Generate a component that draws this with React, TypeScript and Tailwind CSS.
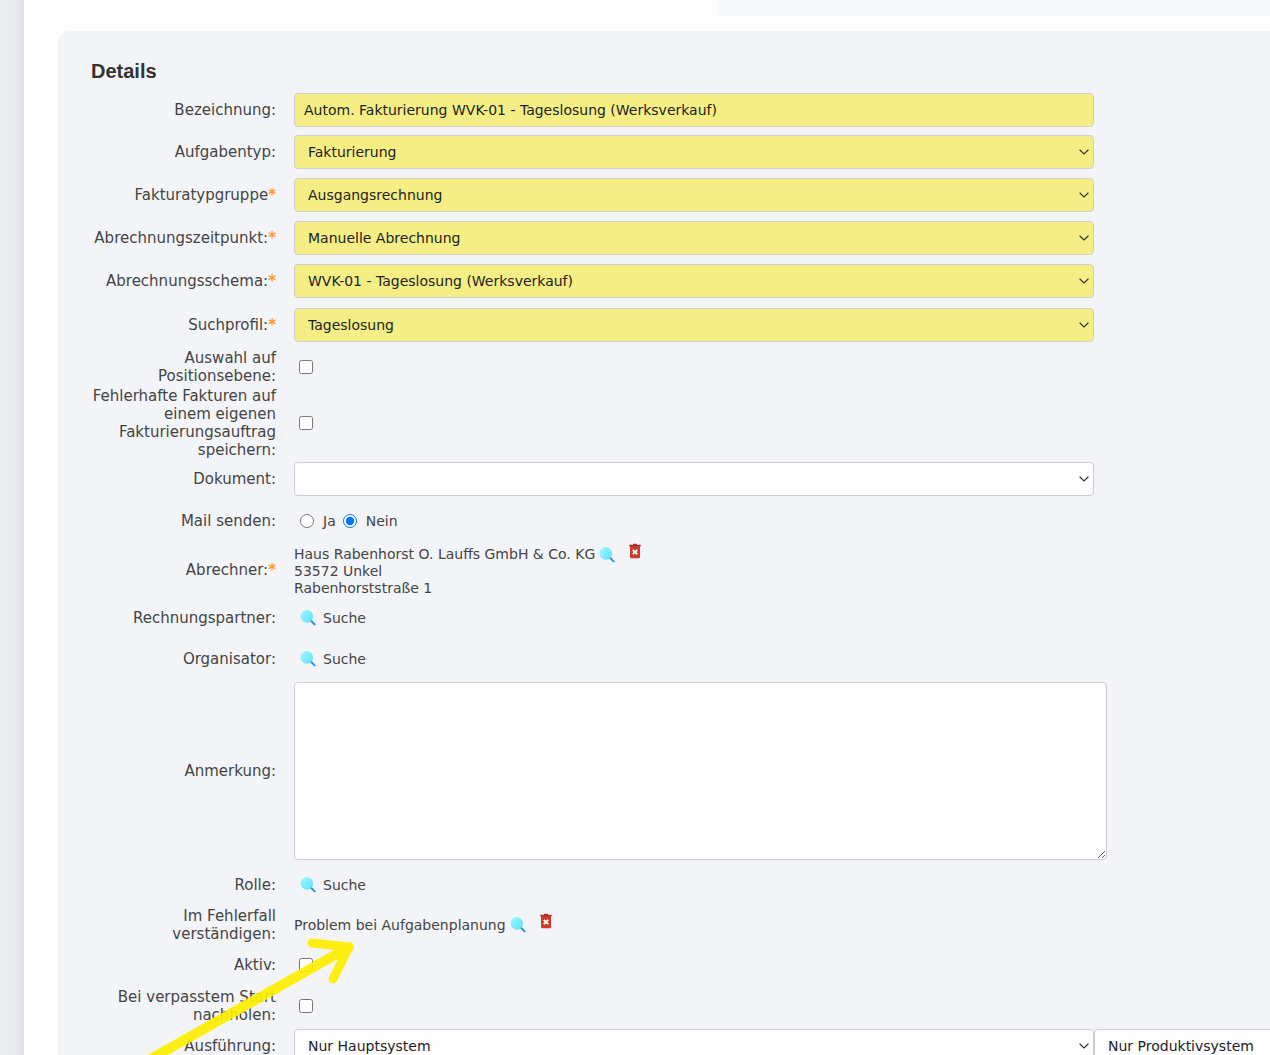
import React from "react";
import clsx from "clsx";

const selectFields = [
  { id: "aufgabentyp", label: "Aufgabentyp:", value: "Fakturierung", row: "min-h-[42px]" },
  { id: "fakturatypgruppe", label: "Fakturatypgruppe", required: true, value: "Ausgangsrechnung", row: "min-h-[44px]" },
  { id: "abrechnungszeitpunkt", label: "Abrechnungszeitpunkt:", required: true, value: "Manuelle Abrechnung", row: "min-h-[42px]" },
  { id: "abrechnungsschema", label: "Abrechnungsschema:", required: true, value: "WVK-01 - Tageslosung (Werksverkauf)", row: "min-h-[44px]" },
  { id: "suchprofil", label: "Suchprofil:", required: true, value: "Tageslosung", row: "min-h-[43px]" },
];

function SearchIcon() {
  return (
    <svg viewBox="0 0 16 16" className="size-4" aria-hidden="true">
      <defs>
        <linearGradient id="lens" x1="0" y1="0" x2="1" y2="1">
          <stop offset="0" stopColor="#9dfbff" />
          <stop offset="1" stopColor="#62dcfb" />
        </linearGradient>
      </defs>
      <path d="M10.3 10l4.300 4.400" stroke="#2196e3" strokeWidth="2" strokeLinecap="round" />
      <circle cx="6.800" cy="6.400" r="6.300" fill="url(#lens)" />
    </svg>
  );
}

function TrashIcon() {
  return (
    <svg viewBox="0 0 12 16" className="h-4 w-3" aria-hidden="true">
      <path d="M1 3h10v11c0 .8-.6 1.300-1.300 1.300H2.300c-.7 0-1.300-.5-1.300-1.300z" fill="#cf3a2d" />
      <path d="M4 .8h4v.9h3.700v1.800H.3V1.700H4z" fill="#a8322a" />
      <path d="M3.800 6.800l4.400 4.400M8.200 6.800l-4.400 4.400" stroke="#fff" strokeWidth="1.900" />
    </svg>
  );
}

function Row({
  label,
  htmlFor,
  required,
  className,
  children,
}: {
  label: string;
  htmlFor?: string;
  required?: boolean;
  className: string;
  children: React.ReactNode;
}) {
  const text = (
    <>
      {label}
      {required && <span className="font-bold text-[#ff9a1a]">*</span>}
    </>
  );

  return (
    <div className={clsx("flex items-center gap-[18px]", className)}>
      <div className="w-[185px] shrink-0 text-right text-[15px] leading-[18px]">
        {htmlFor ? <label htmlFor={htmlFor}>{text}</label> : <span>{text}</span>}
      </div>
      {children}
    </div>
  );
}

function Select({ id, value, yellow, label }: { id?: string; value: string; yellow?: boolean; label?: string }) {
  return (
    <div className="relative w-[800px] shrink-0">
      <select
        id={id}
        aria-label={label}
        className={clsx(
          "block h-[34px] w-full appearance-none rounded border border-[#cfcdd2] pr-8 pl-[13px] text-[#222]",
          yellow ? "bg-[#f5ee84]" : "bg-[#fdfdfd]"
        )}
      >
        <option>{value}</option>
      </select>
      <svg
        viewBox="0 0 10 6"
        className="pointer-events-none absolute top-3.5 right-[5px] h-1.5 w-2.5"
        fill="none"
        stroke="#333"
        strokeWidth="1.200"
        aria-hidden="true"
      >
        <path d="M.6 .7L5 5l4.400-4.300" />
      </svg>
    </div>
  );
}

function Checkbox({ id }: { id: string }) {
  return <input id={id} type="checkbox" className="ml-[5px] size-3.5" />;
}

function SearchButton({ label }: { label: string }) {
  return (
    <button type="button" aria-label={label} className="ml-1.5 flex items-center gap-[7px]">
      <SearchIcon />
      Suche
    </button>
  );
}

function EditButtons() {
  return (
    <span className="ml-1 inline-flex h-4 items-start gap-3.5">
      <button type="button" aria-label="Suchen">
        <SearchIcon />
      </button>
      <button type="button" aria-label="Entfernen" className="-mt-1">
        <TrashIcon />
      </button>
    </span>
  );
}

export default function App() {
  return (
    <div className="relative flex min-h-screen overflow-hidden bg-[#fdfdfd] font-['DejaVu_Sans',Verdana,sans-serif] text-sm text-[#444]">
      <div className="w-6 shrink-0 bg-linear-to-r from-[#ebecf0] from-60% to-[#e1e2e9]" />

      <main className="min-w-0 flex-1 pl-[34px]">
        <div className="flex justify-end">
          <div className="h-4 w-[552px] bg-[#f7f8fb]" />
        </div>

        <form className="mt-[15px] rounded-tl-xl bg-[#f3f4f8] pt-7 pl-[33px]">
          <h2 className="h-[30px] font-['Liberation_Sans',Arial,sans-serif] text-xl leading-6 font-bold text-[#333]">
            Details
          </h2>

          <Row label="Bezeichnung:" htmlFor="bezeichnung" className="min-h-[42px]">
            <input
              id="bezeichnung"
              type="text"
              defaultValue="Autom. Fakturierung WVK-01 - Tageslosung (Werksverkauf)"
              className="h-[34px] w-[800px] shrink-0 rounded border border-[#cfcdd2] bg-[#f5ee84] px-[9px] text-[#222]"
            />
          </Row>

          {selectFields.map((field) => (
            <Row key={field.id} label={field.label} htmlFor={field.id} required={field.required} className={field.row}>
              <Select id={field.id} value={field.value} yellow />
            </Row>
          ))}

          <Row label="Auswahl auf Positionsebene:" htmlFor="positionsebene" className="min-h-[41px]">
            <Checkbox id="positionsebene" />
          </Row>
          <Row
            label="Fehlerhafte Fakturen auf einem eigenen Fakturierungsauftrag speichern:"
            htmlFor="fehlerhafte"
            className="min-h-[72px]"
          >
            <Checkbox id="fehlerhafte" />
          </Row>
          <Row label="Dokument:" htmlFor="dokument" className="min-h-10">
            <Select id="dokument" value="" />
          </Row>

          <Row label="Mail senden:" className="min-h-11">
            <div role="radiogroup" aria-label="Mail senden" className="ml-1.5 flex items-center gap-[7px]">
              <label className="flex items-center gap-[9px]">
                <input type="radio" name="mail" className="size-3.5" />
                Ja
              </label>
              <label className="flex items-center gap-[9px]">
                <input type="radio" name="mail" defaultChecked className="size-3.5" />
                Nein
              </label>
            </div>
          </Row>

          <Row label="Abrechner:" required className="min-h-[54px]">
            <address className="pt-[3px] leading-[17px] not-italic">
              <div className="flex items-center">
                Haus Rabenhorst O. Lauffs GmbH &amp; Co. KG
                <EditButtons />
              </div>
              53572 Unkel
              <br />
              Rabenhorststraße 1
            </address>
          </Row>
          <Row label="Rechnungspartner:" className="min-h-[42px]">
            <SearchButton label="Rechnungspartner suchen" />
          </Row>
          <Row label="Organisator:" className="min-h-[39px]">
            <SearchButton label="Organisator suchen" />
          </Row>
          <Row label="Anmerkung:" htmlFor="anmerkung" className="min-h-[186px]">
            <textarea
              id="anmerkung"
              className="h-[178px] w-[813px] shrink-0 rounded border border-[#cfcdd2] bg-[#fdfdfd] p-2"
            />
          </Row>
          <Row label="Rolle:" className="min-h-[42px]">
            <SearchButton label="Rolle suchen" />
          </Row>
          <Row label="Im Fehlerfall verständigen:" className="min-h-[38px]">
            <div className="flex items-center">
              Problem bei Aufgabenplanung
              <EditButtons />
            </div>
          </Row>
          <Row label="Aktiv:" htmlFor="aktiv" className="min-h-[42px]">
            <Checkbox id="aktiv" />
          </Row>
          <Row label="Bei verpasstem Start nachholen:" htmlFor="nachholen" className="min-h-[39px]">
            <Checkbox id="nachholen" />
          </Row>
          <Row label="Ausführung:" htmlFor="ausfuehrung" className="min-h-[42px]">
            <div className="flex">
              <Select id="ausfuehrung" value="Nur Hauptsystem" />
              <Select value="Nur Produktivsystem" label="System" />
            </div>
          </Row>
        </form>
      </main>

      {/* Hand-drawn marker arrow */}
      <svg
        viewBox="0 0 220 130"
        className="pointer-events-none absolute top-[935px] left-[140px] h-[130px] w-[220px]"
        fill="none"
        stroke="#ffef00"
        strokeLinecap="round"
        strokeLinejoin="round"
        opacity="0.92"
        aria-hidden="true"
      >
        <path d="M0 130L209 12" strokeWidth="10" />
        <path d="M172 8L209 12L193 44" strokeWidth="9" />
      </svg>
    </div>
  );
}
